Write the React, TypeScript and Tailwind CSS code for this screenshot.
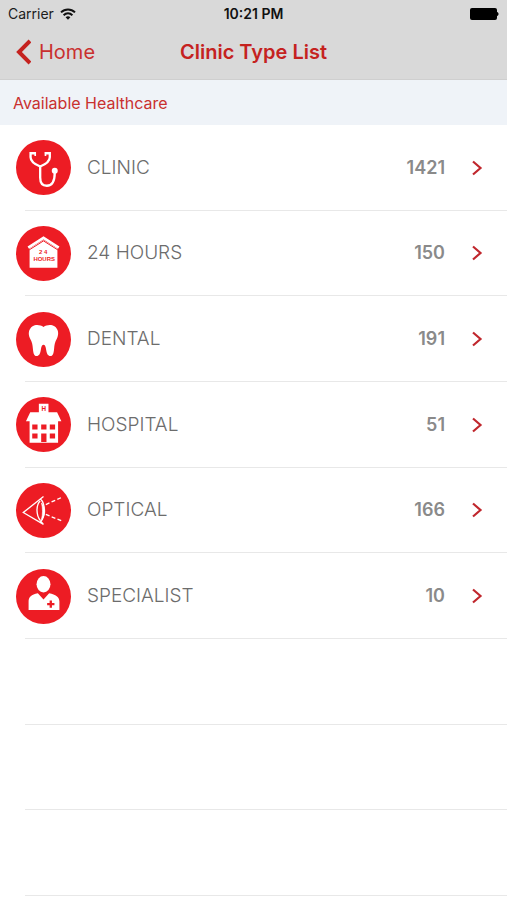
import type { ReactNode } from 'react';

interface ClinicType {
  label: string;
  count: number;
  icon: ReactNode;
}

const EMPTY_ROWS = 3;

const ClinicIcon = () => (
  <g fill="none" stroke="#fff" strokeWidth="7">
    <path d="M60 40H44V52C44 65 56 73 73 80C90 73 102 65 102 52V40H87" />
    <path d="M58 36V48M89 36V48" strokeWidth="5" />
    <path d="M73 78V113C73 129 79 138 93 138C108 138 117 124 117 98" />
    <circle cx="117" cy="93" r="9" fill="#fff" stroke="none" />
  </g>
);

const HoursIcon = () => (
  <>
    <path d="M41 68V126H125V68L83 42Z" fill="#fff" />
    <path d="M37 65L83 36L129 65" fill="none" stroke="#fff" strokeWidth="8" />
    <path d="M40 72L83 45L126 72" fill="none" stroke="#ed1c24" strokeWidth="3" />
    <g
      fill="#ed1c24"
      fontFamily="Liberation Sans, sans-serif"
      fontWeight="700"
      fontSize="18"
      textAnchor="middle"
    >
      <text x="82" y="84">2 4</text>
      <text x="85" y="105">HOURS</text>
    </g>
  </>
);

const DentalIcon = () => (
  <path
    d="M83 45C73 38 59 37 50 43C38 51 36 66 42 79C49 91 50 99 51 111C52 123 54 133 62 133C70 133 73 126 75 114C76 105 79 99 83 99C87 99 90 105 91 114C93 126 96 133 104 133C112 133 114 123 115 111C116 99 117 91 124 79C130 66 128 51 116 43C107 37 93 38 83 45Z"
    fill="#fff"
  />
);

const HospitalIcon = () => (
  <>
    <path d="M69 20H98V46H124L137 73H127V138H41V73H30L43 46H69Z" fill="#fff" />
    <g fill="#ed1c24">
      <path d="M49 83h16v15h-16zM76 83h16v15h-16zM102 83h16v15h-16z" />
      <path d="M49 110h16v15h-16zM76 110h16v26h-16zM102 110h16v15h-16z" />
      <text
        x="84"
        y="41"
        fontFamily="Liberation Sans, sans-serif"
        fontSize="19"
        fontWeight="700"
        textAnchor="middle"
      >
        H
      </text>
    </g>
  </>
);

const OpticalIcon = () => (
  <g fill="none" stroke="#fff" strokeWidth="4">
    <path d="M83 41L22 89L83 125M74 48C89 62 89 100 75 116L83 125" />
    <path d="M73 54C60 66 60 98 74 114" strokeWidth="4" />
    <path d="M77 60C90 72 90 98 77 110C81 94 81 76 77 60Z" fill="#fff" strokeWidth="2" />
    <path d="M90 65L139 43M90 95L140 115" strokeDasharray="12 7" />
  </g>
);

const SpecialistIcon = () => (
  <>
    <ellipse cx="83" cy="46" rx="21" ry="25" fill="#fff" />
    <path
      d="M38 124V98C38 84 46 77 66 73L83 92L100 73C120 77 131 84 131 98V124Z"
      fill="#fff"
    />
    <path d="M105 95V117M94 106H116" stroke="#ed1c24" strokeWidth="7" />
  </>
);

const clinicTypes: ClinicType[] = [
  { label: 'CLINIC', count: 1421, icon: <ClinicIcon /> },
  { label: '24 HOURS', count: 150, icon: <HoursIcon /> },
  { label: 'DENTAL', count: 191, icon: <DentalIcon /> },
  { label: 'HOSPITAL', count: 51, icon: <HospitalIcon /> },
  { label: 'OPTICAL', count: 166, icon: <OpticalIcon /> },
  { label: 'SPECIALIST', count: 10, icon: <SpecialistIcon /> },
];

function StatusBar() {
  return (
    <div className="grid grid-cols-3 items-center px-2 h-7 text-sm text-[#1c1c1c]">
      <div className="flex items-center gap-1.5">
        <span>Carrier</span>
        <svg viewBox="0 0 16 12" className="w-4 h-3" aria-hidden="true">
          <g fill="none" stroke="#111" strokeWidth="2">
            <path d="M1 4.4C5 .4 11 .4 15 4.4" />
            <path d="M3.6 7.2C6.2 4.7 9.8 4.7 12.4 7.2" />
          </g>
          <path d="M5.6 9.2C7 7.9 9 7.9 10.4 9.2L8 11.8Z" fill="#111" />
        </svg>
      </div>
      <span className="text-center font-semibold text-[#111] whitespace-nowrap">10:21 PM</span>
      <svg viewBox="0 0 31 12" className="w-[31px] h-3 justify-self-end" aria-hidden="true">
        <rect x="2" y="0" width="27" height="12" rx="2" fill="#000" />
        <path d="M29 4C31 4.500 31 7.500 29 8Z" fill="#000" />
      </svg>
    </div>
  );
}

function ClinicRow({ label, count, icon }: ClinicType) {
  return (
    <a href="#" className="flex items-center flex-1 pl-4 pr-6">
      <svg viewBox="0 0 166 166" className="w-[55px] h-[55px] shrink-0" aria-hidden="true">
        <circle cx="83" cy="83" r="83" fill="#ed1c24" />
        {icon}
      </svg>
      <span className="ml-4 flex-1 text-[19px] font-light text-[#6c6c6c]">{label}</span>
      <span className="text-lg font-semibold text-[#8a8a8a]">{count}</span>
      <svg viewBox="0 0 12 16" className="ml-[26px] w-3 h-4" aria-hidden="true">
        <path d="M2 1.500L9.500 8L2 14.500" fill="none" stroke="#c0272d" strokeWidth="2.200" />
      </svg>
    </a>
  );
}

export default function App() {
  return (
    <div className="flex flex-col min-h-screen bg-white font-['Inter',sans-serif]">
      <header className="bg-[#d9d9d9] border-b border-[#cfcfcf]">
        <StatusBar />
        <nav className="grid grid-cols-[1fr_auto_1fr] items-center h-[51px] pb-1 px-4">
          <button type="button" className="flex items-center gap-2 text-xl text-[#c9302f]">
            <svg viewBox="0 0 15 26" className="w-[15px] h-[26px]" aria-hidden="true">
              <path d="M14 2L3 13L14 24" fill="none" stroke="#c5221f" strokeWidth="4" />
            </svg>
            Home
          </button>
          <h1 className="text-xl font-semibold text-[#c5221f]">Clinic Type List</h1>
        </nav>
      </header>

      <h2 className="flex items-center h-[45px] px-[13px] bg-[#eff3f8] text-base text-[#c9302f]">
        Available Healthcare
      </h2>

      <ul className="grid flex-1 auto-rows-fr pb-1">
        {clinicTypes.map((type) => (
          <li key={type.label} className="relative flex min-h-16">
            <ClinicRow {...type} />
            <div className="absolute bottom-0 left-[25px] right-0 h-px bg-[#e8e8e8]" />
          </li>
        ))}
        {Array.from({ length: EMPTY_ROWS }, (_, i) => (
          <li key={i} className="ml-[25px] min-h-16 border-b border-[#e8e8e8]" aria-hidden="true" />
        ))}
      </ul>
    </div>
  );
}
